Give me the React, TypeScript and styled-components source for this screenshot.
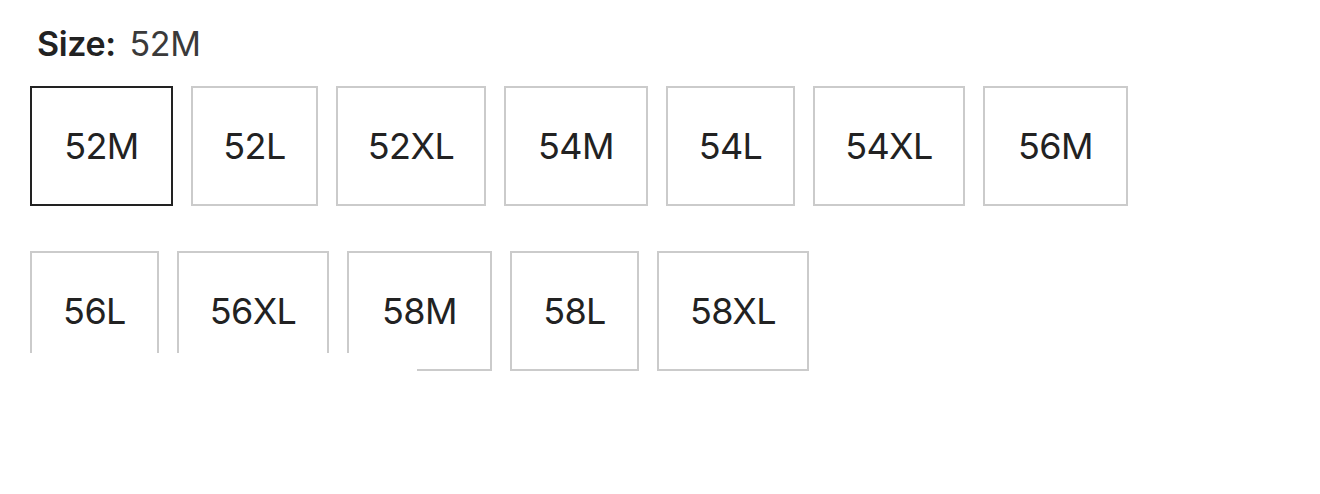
import React from "react";
import styled, { createGlobalStyle } from "styled-components";

const Global = createGlobalStyle`
  html, body { margin: 0; padding: 0; background: #fff; }
  body { font-family: Inter, "Open Sans", sans-serif; }
`;

const Wrapper = styled.div`
  position: relative;
  padding: 22px 0 0 30px;
  width: 1320px;
  height: 494px;
  box-sizing: border-box;
`;

const Label = styled.div`
  display: flex;
  align-items: baseline;
  gap: 14px;
  padding-left: 7px;
  height: 44px;
  font-size: 34px;
  line-height: 44px;
  letter-spacing: -0.4px;
`;

const LabelName = styled.span`
  font-weight: 600;
  color: #222;
`;

const LabelValue = styled.span`
  font-weight: 400;
  color: #3a3a3a;
`;

const Grid = styled.div`
  margin-top: 20px;
  display: flex;
  flex-wrap: wrap;
  column-gap: 18px;
  row-gap: 45px;
  width: 1120px;
`;

const Option = styled.button<{ $active?: boolean; $w: number }>`
  width: ${(p) => p.$w}px;
  height: 120px;
  box-sizing: border-box;
  padding: 0;
  background: #fff;
  border: 2px solid ${(p) => (p.$active ? "#222" : "#cbcbcb")};
  font-family: Inter, sans-serif;
  font-size: 36px;
  letter-spacing: -0.6px;
  font-weight: 400;
  color: #222;
  display: flex;
  align-items: center;
  justify-content: center;
  cursor: pointer;
`;

const Cover = styled.div`
  position: absolute;
  left: 0;
  top: 353px;
  width: 417px;
  height: 40px;
  background: #fff;
`;

const sizes: { label: string; w: number }[] = [
  { label: "52M", w: 143 },
  { label: "52L", w: 127 },
  { label: "52XL", w: 150 },
  { label: "54M", w: 144 },
  { label: "54L", w: 129 },
  { label: "54XL", w: 152 },
  { label: "56M", w: 145 },
  { label: "56L", w: 129 },
  { label: "56XL", w: 152 },
  { label: "58M", w: 145 },
  { label: "58L", w: 129 },
  { label: "58XL", w: 152 },
];

export default function App() {
  const selected = "52M";
  return (
    <>
      <Global />
      <Wrapper>
        <Label>
          <LabelName>Size:</LabelName>
          <LabelValue>{selected}</LabelValue>
        </Label>
        <Grid>
          {sizes.map((s) => (
            <Option key={s.label} $w={s.w} $active={s.label === selected}>
              {s.label}
            </Option>
          ))}
        </Grid>
        <Cover />
      </Wrapper>
    </>
  );
}
